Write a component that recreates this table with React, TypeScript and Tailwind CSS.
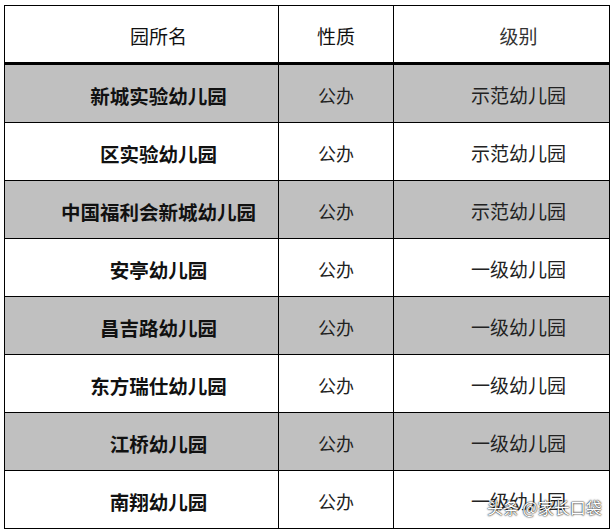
import React from 'react';

const rows: [string, string, string][] = [
  ['新城实验幼儿园', '公办', '示范幼儿园'],
  ['区实验幼儿园', '公办', '示范幼儿园'],
  ['中国福利会新城幼儿园', '公办', '示范幼儿园'],
  ['安亭幼儿园', '公办', '一级幼儿园'],
  ['昌吉路幼儿园', '公办', '一级幼儿园'],
  ['东方瑞仕幼儿园', '公办', '一级幼儿园'],
  ['江桥幼儿园', '公办', '一级幼儿园'],
  ['南翔幼儿园', '公办', '一级幼儿园'],
];

const font = "font-['Noto_Sans_CJK_SC','Noto_Sans',sans-serif]";

const App: React.FC = () => {
  return (
    <div className={`relative w-[614px] h-[532px] bg-white ${font}`}>
      <div className="absolute left-[4px] top-[5px] w-[606px] border-l border-t border-black">
        <div className="grid grid-cols-[274px_115px_216px] h-[59px]">
          <div className="flex items-center justify-center pl-[34px] pt-[4px] border-r border-b-[3px] border-black text-[19px] text-[#111]">
            园所名
          </div>
          <div className="flex items-center justify-center pt-[4px] border-r border-b-[3px] border-black text-[19px] text-[#111]">
            性质
          </div>
          <div className="flex items-center justify-center pl-[34px] pt-[4px] border-r border-b-[3px] border-black text-[19px] text-[#333]">
            级别
          </div>
        </div>
        {rows.map(([name, type, level], i) => (
          <div
            key={name}
            className={`grid grid-cols-[274px_115px_216px] h-[58px] ${i % 2 === 0 ? 'bg-[#c0c0c0]' : 'bg-white'}`}
          >
            <div className="flex items-center justify-center pl-[34px] pt-[5px] border-r border-b border-black text-[19.5px] font-bold text-[#111]">
              {name}
            </div>
            <div className="flex items-center justify-center pt-[4px] border-r border-b border-black text-[18px] text-[#222]">
              {type}
            </div>
            <div className="flex items-center justify-center pl-[34px] pt-[4px] border-r border-b border-black text-[19px] text-[#222]">
              {level}
            </div>
          </div>
        ))}
      </div>
      <div className="absolute left-[487px] top-[497px] text-[16px] leading-[20px] text-white [text-shadow:0_0_2px_rgba(0,0,0,0.9),0_0_1px_rgba(0,0,0,0.9)]">
        头条 @家长口袋
      </div>
    </div>
  );
};

export default App;
